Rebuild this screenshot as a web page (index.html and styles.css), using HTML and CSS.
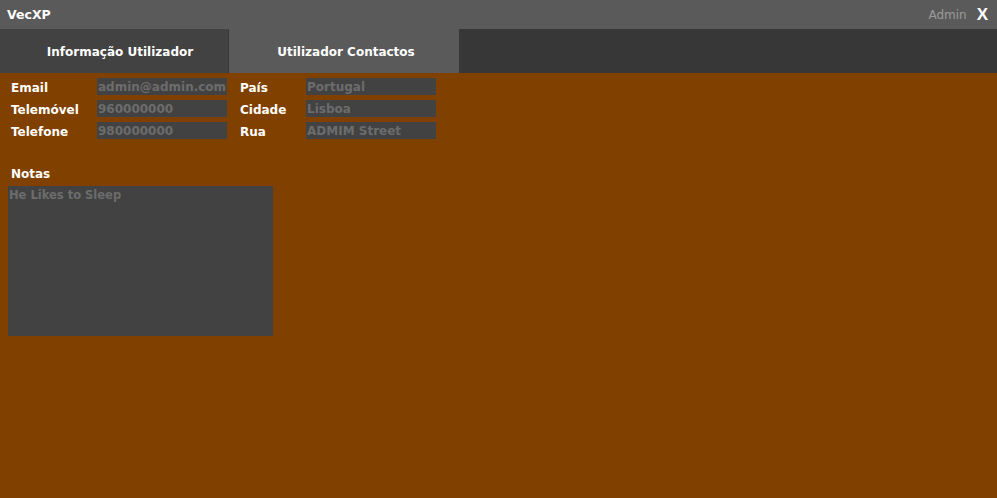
FILE: index.html
```html
<!DOCTYPE html>
<html lang="pt">
<head>
<meta charset="utf-8">
<title>VecXP</title>
<link rel="stylesheet" href="styles.css">
</head>
<body>
<div class="app">
  <header class="titlebar">
    <span class="brand">VecXP</span>
    <div class="user">
      <span class="user-name">Admin</span>
      <span class="close">X</span>
    </div>
  </header>
  <nav class="tabs">
    <div class="tab">Informação Utilizador</div>
    <div class="tab active">Utilizador Contactos</div>
  </nav>
  <main class="content">
    <div class="fields">
      <div class="col">
        <div class="row"><span class="label">Email</span><span class="input">admin@admin.com</span></div>
        <div class="row"><span class="label">Telemóvel</span><span class="input">960000000</span></div>
        <div class="row"><span class="label">Telefone</span><span class="input">980000000</span></div>
      </div>
      <div class="col col2">
        <div class="row"><span class="label">País</span><span class="input">Portugal</span></div>
        <div class="row"><span class="label">Cidade</span><span class="input">Lisboa</span></div>
        <div class="row"><span class="label">Rua</span><span class="input">ADMIM Street</span></div>
      </div>
    </div>
    <div class="notes">
      <span class="label notes-label">Notas</span>
      <div class="textarea">He Likes to Sleep</div>
    </div>
  </main>
</div>
</body>
</html>
```
FILE: styles.css
```css
* { box-sizing: border-box; }
html, body { margin: 0; padding: 0; height: 100%; }
body {
  font-family: "DejaVu Sans", sans-serif;
  font-weight: 700;
  background: #7f4000;
}
.app { display: flex; flex-direction: column; height: 498px; }
.titlebar {
  height: 29px;
  background: #5a5a5a;
  display: flex;
  align-items: center;
  justify-content: space-between;
  padding: 0 9px 0 7px;
}
.brand { color: #fff; font-size: 12.5px; }
.user { display: flex; align-items: center; gap: 10px; }
.user-name {
  color: #9a9a9a;
  font-weight: 400;
  font-size: 12px;
}
.close {
  color: #fff;
  font-family: "Liberation Sans", sans-serif;
  font-weight: 700;
  font-size: 17px;
}
.tabs {
  height: 44px;
  background: #373737;
  display: flex;
}
.tab {
  width: 228px;
  background: #424242;
  color: #fff;
  font-size: 12px;
  display: flex;
  align-items: center;
  justify-content: center;
  padding-left: 12px;
  padding-top: 2px;
}
.tab.active {
  width: 230px;
  margin-left: 1px;
  background: #5a5a5a;
  padding-left: 4px;
}
.content { flex: 1; background: #7f4000; padding: 5px 0 0 8px; }
.fields { display: flex; gap: 10px; }
.col { display: flex; flex-direction: column; gap: 5px; }
.row { display: flex; align-items: center; height: 17px; }
.label {
  color: #fff;
  font-size: 12px;
  padding-left: 3px;
  padding-top: 2px;
}
.col .label { width: 89px; }
.col2 .label { width: 69px; }
.input {
  width: 130px;
  height: 17px;
  background: #424242;
  color: #6c6c6c;
  font-size: 12px;
  line-height: 19px;
  padding-left: 1px;
  white-space: nowrap;
  overflow: hidden;
}
.notes { margin-top: 25px; display: flex; flex-direction: column; }
.notes-label { line-height: 17px; }
.textarea {
  margin-top: 3px;
  width: 265px;
  height: 150px;
  background: #424242;
  color: #6c6c6c;
  font-size: 11.5px;
  padding: 2px 1px;
}
```
